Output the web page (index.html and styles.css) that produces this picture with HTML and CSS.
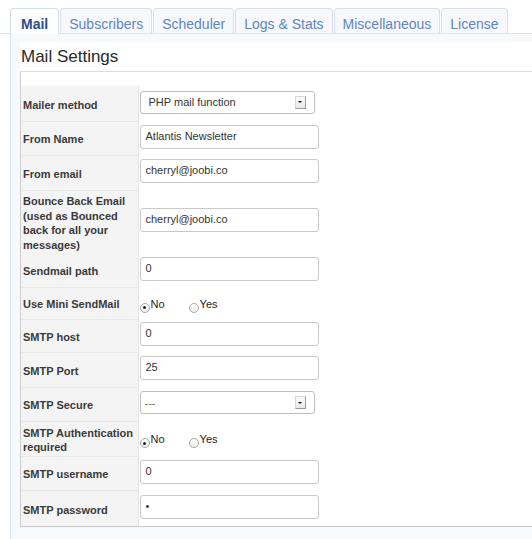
FILE: index.html
```html
<!DOCTYPE html>
<html>
<head>
<meta charset="utf-8">
<link rel="stylesheet" href="styles.css">
</head>
<body>
<div class="tabs">
  <div class="tab active">Mail</div>
  <div class="tab">Subscribers</div>
  <div class="tab">Scheduler</div>
  <div class="tab">Logs &amp; Stats</div>
  <div class="tab">Miscellaneous</div>
  <div class="tab">License</div>
</div>
<div class="panel">
  <div class="inner">
    <h2 class="title">Mail Settings</h2>
    <div class="box">
      <table class="form">
        <tr class="r35">
          <td class="label">Mailer method</td>
          <td class="value"><div class="select"><span class="sel-text">PHP mail function</span><span class="sel-btn"><span class="arrow"></span></span></div></td>
        </tr>
        <tr class="r34">
          <td class="label">From Name</td>
          <td class="value"><div class="input">Atlantis Newsletter</div></td>
        </tr>
        <tr class="r35">
          <td class="label">From email</td>
          <td class="value"><div class="input">cherryl@joobi.co</div></td>
        </tr>
        <tr class="r63">
          <td class="label">Bounce Back Email (used as Bounced back for all your messages)</td>
          <td class="value"><div class="input">cherryl@joobi.co</div></td>
        </tr>
        <tr class="r34">
          <td class="label nodiv">Sendmail path</td>
          <td class="value"><div class="input">0</div></td>
        </tr>
        <tr class="r32">
          <td class="label">Use Mini SendMail</td>
          <td class="value"><span class="radio checked"></span><span class="rlabel">No</span><span class="radio"></span><span class="rlabel">Yes</span></td>
        </tr>
        <tr class="r33">
          <td class="label">SMTP host</td>
          <td class="value"><div class="input">0</div></td>
        </tr>
        <tr class="r35">
          <td class="label">SMTP Port</td>
          <td class="value"><div class="input">25</div></td>
        </tr>
        <tr class="r34">
          <td class="label">SMTP Secure</td>
          <td class="value"><div class="select"><span class="sel-text short">---</span><span class="sel-btn"><span class="arrow"></span></span></div></td>
        </tr>
        <tr class="r35">
          <td class="label">SMTP Authentication required</td>
          <td class="value"><span class="radio checked"></span><span class="rlabel">No</span><span class="radio"></span><span class="rlabel">Yes</span></td>
        </tr>
        <tr class="r34">
          <td class="label">SMTP username</td>
          <td class="value"><div class="input">0</div></td>
        </tr>
        <tr class="r36">
          <td class="label">SMTP password</td>
          <td class="value"><div class="input">&bull;</div></td>
        </tr>
      </table>
    </div>
    <div class="after"></div>
  </div>
</div>
</body>
</html>
```

FILE: styles.css
```css
html, body {
  margin: 0;
  padding: 0;
  background: #ffffff;
  font-family: "Liberation Sans", Arial, sans-serif;
  color: #333333;
  overflow: hidden;
}

.tabs {
  display: flex;
  padding: 8px 0 0 10px;
  border-bottom: 1px solid #dae2ec;
  height: 25px;
}

.tab {
  height: 24px;
  line-height: 30px;
  padding: 0 8px;
  margin-right: 1px;
  border: 1px solid #d6dfea;
  border-bottom: none;
  border-radius: 4px 4px 0 0;
  background: #f6f8fb;
  color: #6186bd;
  font-size: 14px;
}

.tab.active {
  background: #ffffff;
  color: #2c4d8e;
  font-weight: bold;
  height: 25px;
  padding: 0 10px;
}

.panel {
  margin-left: 10px;
  border-left: 1px solid #d8e1ec;
  background: #f7f9fc;
  padding: 8px 0 0 9px;
  height: 497px;
}

.inner {
  background: #f7f9fc;
}

.title {
  margin: 0;
  background: #ffffff;
  font-size: 17px;
  font-weight: normal;
  line-height: 29px;
  height: 29px;
  color: #2a2a2a;
  padding-left: 1px;
}

.box {
  background: #ffffff;
  border-top: 1px solid #dddddd;
  border-left: 1px solid #cccccc;
  border-bottom: 1px solid #c8c8c8;
  padding-top: 14px;
}

.form {
  border-collapse: collapse;
  border-spacing: 0;
  table-layout: fixed;
  width: 100%;
}

.form td {
  padding: 0;
}

.r32 { height: 32px; }
.r33 { height: 33px; }
.r34 { height: 34px; }
.r35 { height: 35px; }
.r36 { height: 36px; }
.r63 { height: 63px; }

.label {
  box-sizing: border-box;
  width: 117px;
  padding: 3px 1px 0 2px !important;
  background: #f4f4f4;
  border-top: 1px solid #e8e8e8;
  border-right: 1px solid #e4e4e4;
  font-size: 11px;
  font-weight: bold;
  color: #3a3a3a;
  line-height: 14.5px;
  vertical-align: middle;
}

.form tr:first-child .label {
  border-top: none;
}

.label.nodiv {
  border-top-color: #f4f4f4;
}

.value {
  padding-left: 1px !important;
  vertical-align: middle;
}

.input {
  box-sizing: border-box;
  width: 179px;
  height: 24px;
  border: 1px solid #c9c9c9;
  border-radius: 3px;
  padding-left: 5px;
  font-size: 11px;
  line-height: 21px;
  color: #333333;
  background: #ffffff;
  margin-top: -3px;
}

.select {
  box-sizing: border-box;
  width: 175px;
  height: 23px;
  border: 1px solid #bdbdbd;
  border-radius: 3px;
  background: #ffffff;
  display: flex;
  align-items: center;
  justify-content: space-between;
  font-size: 11px;
  color: #333333;
  margin-top: -3px;
}

.sel-text {
  padding-left: 8px;
}

.sel-text.short {
  padding-left: 4px;
  color: #666666;
}

.sel-btn {
  box-sizing: border-box;
  width: 11px;
  height: 13px;
  margin-right: 8px;
  border: 1px solid #d8d8d8;
  border-right-color: #9a9a9a;
  border-bottom-color: #9a9a9a;
  background: linear-gradient(#fafafa, #e9e9e9);
  display: flex;
  align-items: center;
  justify-content: center;
}

.arrow {
  width: 0;
  height: 0;
  border-left: 2px solid transparent;
  border-right: 2px solid transparent;
  border-top: 2px solid #111111;
}

.radio {
  display: inline-block;
  box-sizing: border-box;
  width: 10px;
  height: 10px;
  border: 1px solid #a8a8a8;
  border-radius: 50%;
  background: linear-gradient(#ffffff, #ededed);
  vertical-align: -5px;
  position: relative;
}

.radio.checked::after {
  content: "";
  position: absolute;
  left: 2.5px;
  top: 2.5px;
  width: 3px;
  height: 3px;
  border-radius: 50%;
  background: #222222;
}

.rlabel {
  font-size: 11px;
  color: #222222;
  margin-left: 1px;
  margin-right: 24px;
}

.after {
  height: 8px;
  background: #f7f9fc;
}
```
